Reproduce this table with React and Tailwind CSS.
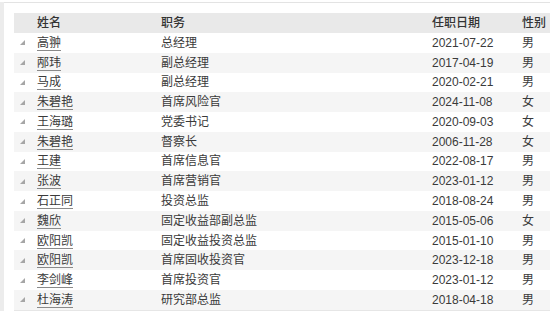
const rows = [
  ['高翀', '总经理', '2021-07-22', '男'],
  ['邴玮', '副总经理', '2017-04-19', '男'],
  ['马成', '副总经理', '2020-02-21', '男'],
  ['朱碧艳', '首席风险官', '2024-11-08', '女'],
  ['王海璐', '党委书记', '2020-09-03', '女'],
  ['朱碧艳', '督察长', '2006-11-28', '女'],
  ['王建', '首席信息官', '2022-08-17', '男'],
  ['张波', '首席营销官', '2023-01-12', '男'],
  ['石正同', '投资总监', '2018-08-24', '男'],
  ['魏欣', '固定收益部副总监', '2015-05-06', '女'],
  ['欧阳凯', '固定收益投资总监', '2015-01-10', '男'],
  ['欧阳凯', '首席固收投资官', '2023-12-18', '男'],
  ['李剑峰', '首席投资官', '2023-01-12', '男'],
  ['杜海涛', '研究部总监', '2018-04-18', '男'],
]

const cols = 'grid grid-cols-[23px_124px_271px_90px_1fr] items-center'

function Arrow() {
  return (
    <svg width="5" height="5" viewBox="0 0 5 5" className="ml-[6px]">
      <polygon points="5,0 5,5 0,5" fill="#a6a6a6" />
    </svg>
  )
}

export default function App() {
  return (
    <div className="flex w-[550px] h-[311px] overflow-hidden bg-white text-[12px] font-['Liberation_Sans','Noto_Sans_CJK_SC',sans-serif]">
      <div className="w-[4px] shrink-0 bg-[#ececec] mt-[2px]"></div>
      <div className="flex-1 min-w-0">
        <div className="mt-[2px] h-px bg-[#e3e3e3]"></div>
        <div className="ml-[10px] mt-[10px]">
          <div className={`${cols} h-[20px] bg-[#e9e9e9] text-[#333] font-medium`}>
            <span></span>
            <span>姓名</span>
            <span>职务</span>
            <span>任职日期</span>
            <span className="whitespace-nowrap">性别</span>
          </div>
          {rows.map((r, i) => (
            <div
              key={i}
              className={`${cols} h-[19.77px] text-[#3a3a3a] ${i % 2 === 1 ? 'bg-[#f5f5f5]' : 'bg-white'}`}
            >
              <Arrow />
              <span>
                <span className="inline-block leading-[14px] border-b border-[#8a8a8a]">{r[0]}</span>
              </span>
              <span className="whitespace-nowrap">{r[1]}</span>
              <span>{r[2]}</span>
              <span>{r[3]}</span>
            </div>
          ))}
          <div className="h-px bg-[#e6e6e6]"></div>
        </div>
      </div>
    </div>
  )
}
